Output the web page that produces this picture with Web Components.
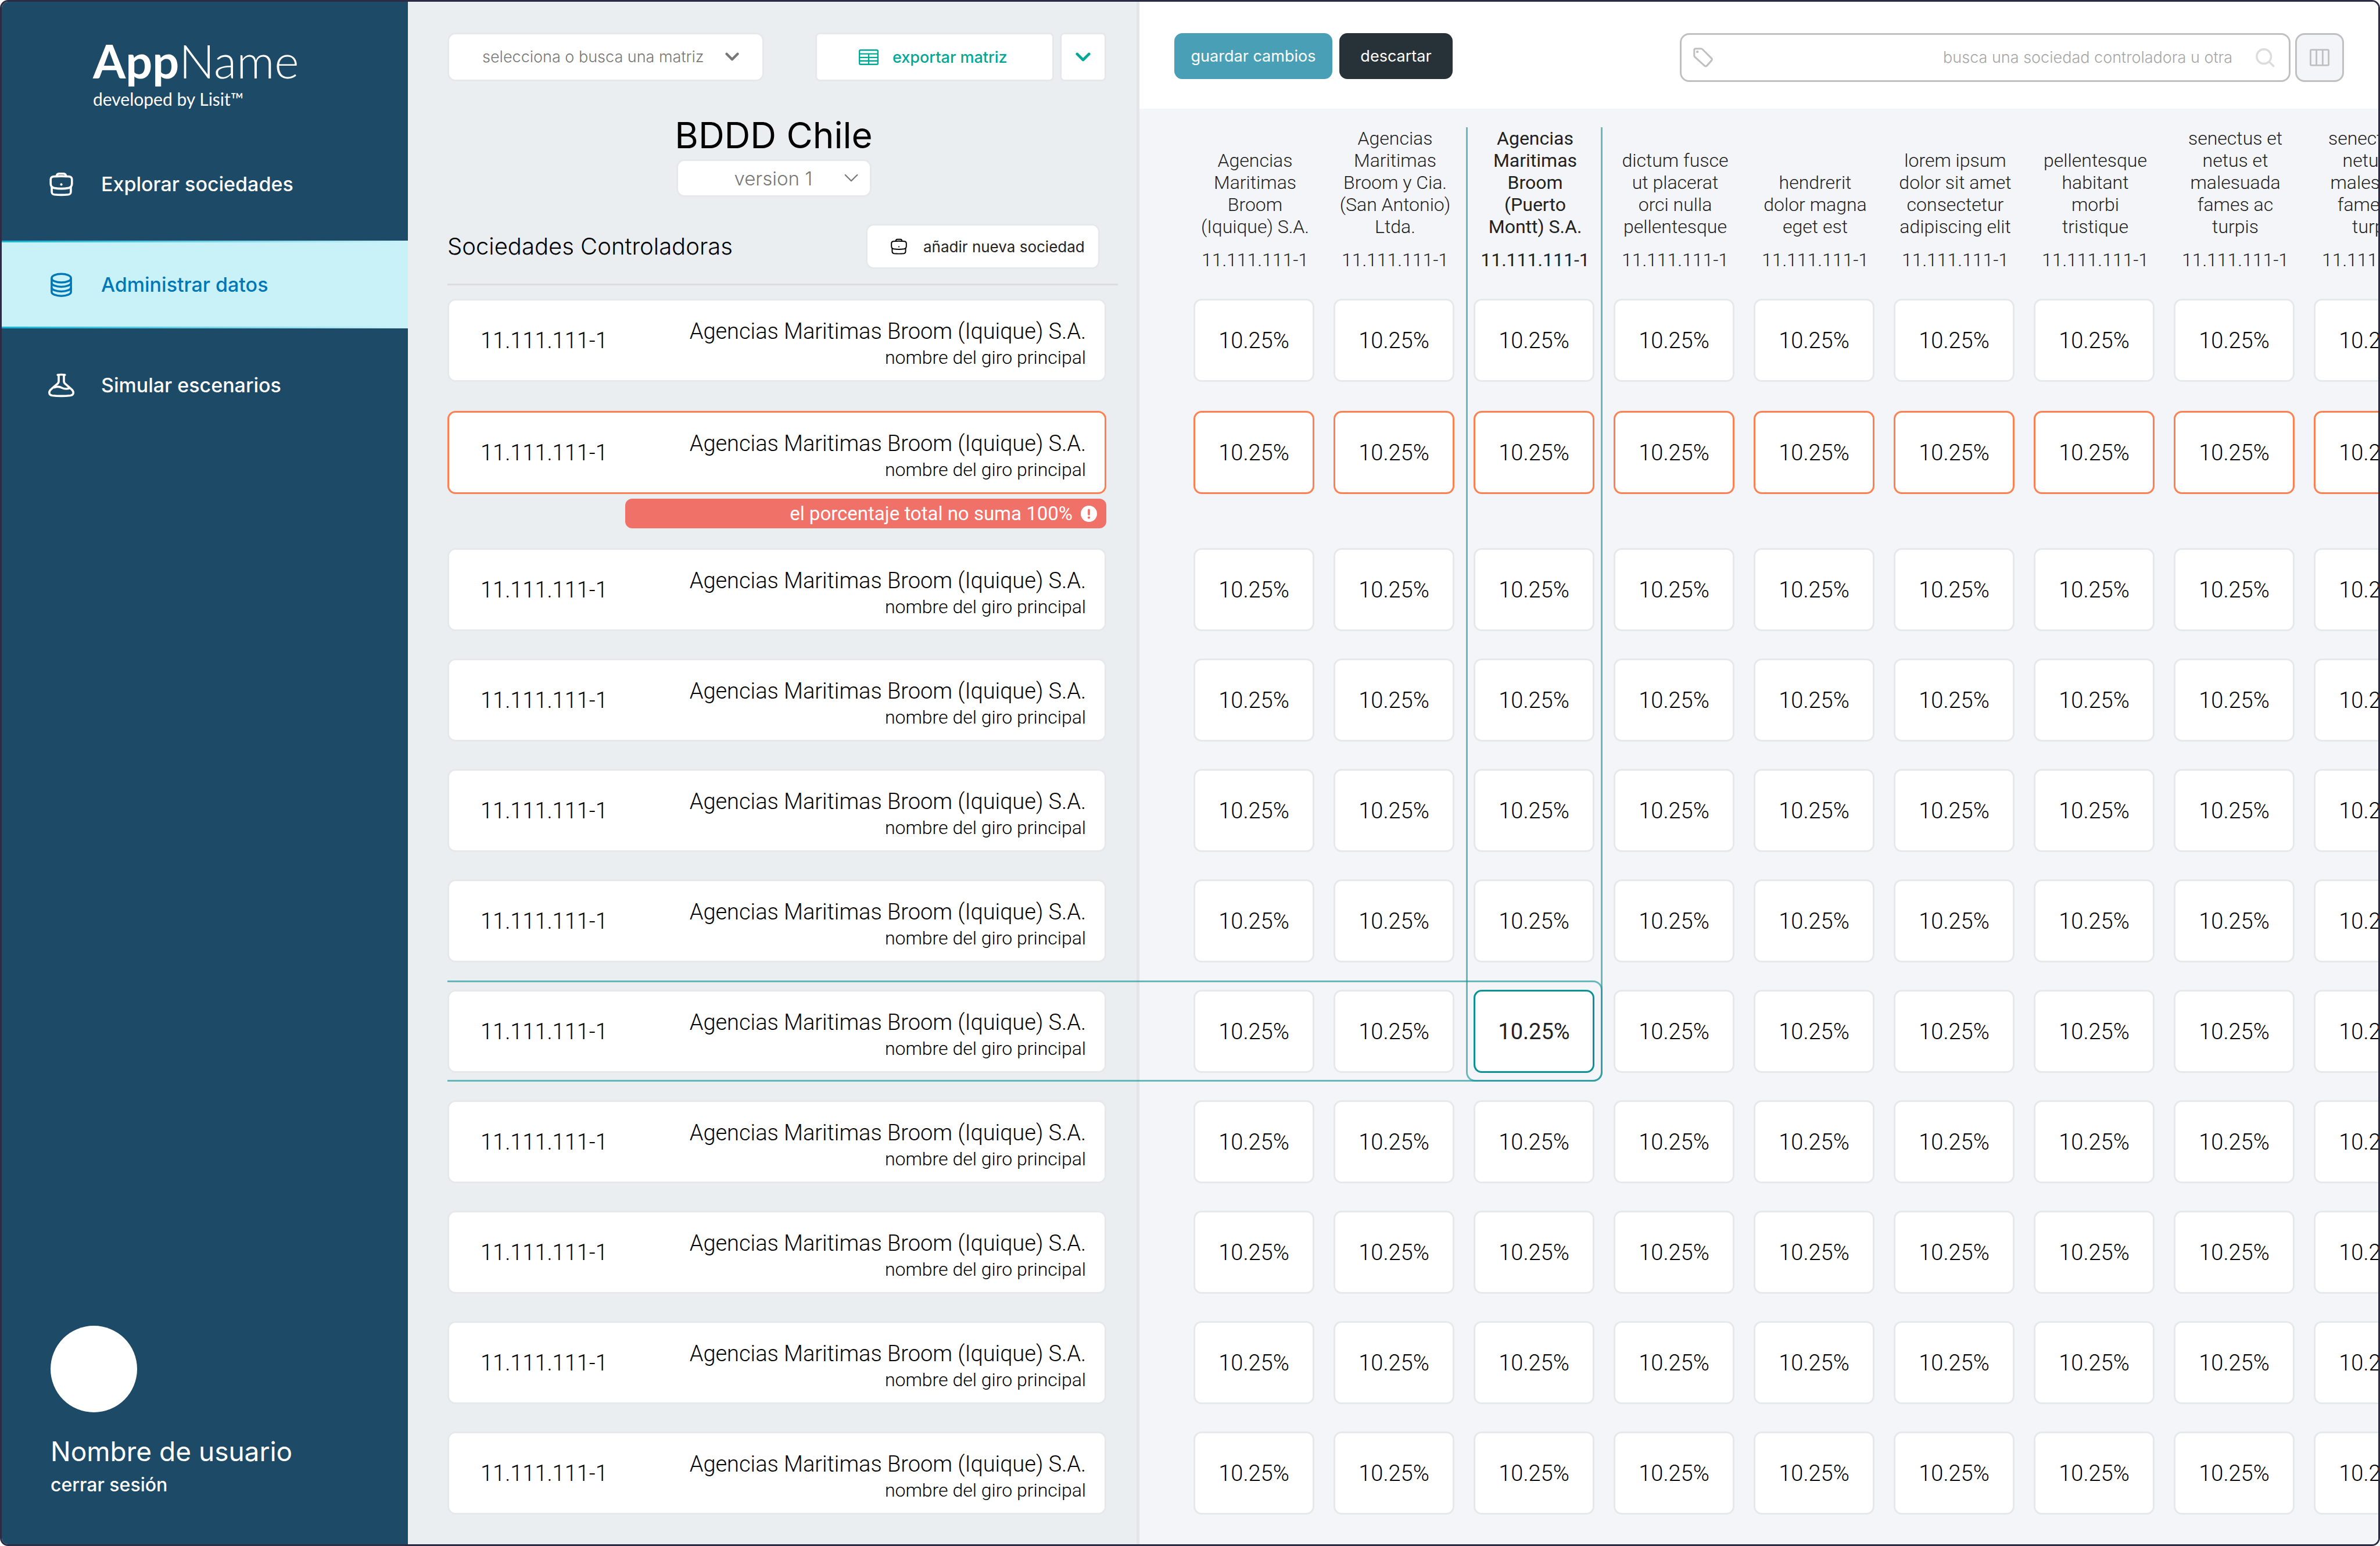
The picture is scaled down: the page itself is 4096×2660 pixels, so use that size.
<!DOCTYPE html>
<html lang="es">
<head>
<meta charset="utf-8">
<title>AppName – Administrar datos</title>
<style>
  :root {
    --frame: #2c2b45;
    --navy: #1d4a67;
    --panel: #eaeef1;
    --canvas: #f4f5f8;
    --edge: #e6e8ec;
    --teal: #00a896;
    --select: #0b9196;
    --alert: #ff7f50;
    --ui: Inter, "Liberation Sans", sans-serif;
    --data: Roboto, "Liberation Sans", sans-serif;
    --brand: Lato, "Liberation Sans", sans-serif;
    --row: 190px;
    --row-lead: 193px;
    --row-alert: 236px;
    --card: 143px;
  }
  html, body { margin: 0; background: #fff; }
  body { font-family: var(--ui); color: #000; }
</style>
</head>
<body>
<app-shell>
  <app-sidebar>
    <nav-item icon="briefcase">Explorar sociedades</nav-item>
    <nav-item icon="database" active>Administrar datos</nav-item>
    <nav-item icon="flask">Simular escenarios</nav-item>
  </app-sidebar>
  <society-panel></society-panel>
  <matrix-panel></matrix-panel>
</app-shell>

<script>
const ICONS = {
  briefcase: ['0 0 46 46', `<g fill="none" stroke="currentColor" stroke-width="4" stroke-linecap="round" stroke-linejoin="round">
    <path d="M14 8c.5-3.500 2-5 4.500-5h9c2.500 0 4 1.500 4.500 5"/>
    <path d="M3 14c0-3.500 2-5 5-5.500 10-1 20-1 30 0 3 .5 5 2 5 5.500v8c0 5-2 7-6 8-9 1.700-19 1.700-28 0-4-1-6-3-6-8z"/>
    <path d="M5 28v9c0 4 1.500 5 5 5.500 9 .8 17 .8 26 0 3.500-.5 5-1.500 5-5.500v-9"/></g><circle cx="23" cy="23.500" r="2.300" fill="currentColor"/>`],
  briefcaseThin: ['0 0 46 46', `<g fill="none" stroke="currentColor" stroke-width="3.200" stroke-linecap="round" stroke-linejoin="round">
    <path d="M14 8c.5-3.500 2-5 4.500-5h9c2.500 0 4 1.500 4.500 5"/>
    <path d="M2 14c0-3.500 2-5 5-5.500 10.500-1 21.500-1 32 0 3 .5 5 2 5 5.500v8c0 5-2 7-6 8-10 1.700-20 1.700-30 0-4-1-6-3-6-8z"/>
    <path d="M4 28v9c0 4 1.500 5.500 5 6 9 1 19 1 28 0 3.500-.5 5-2 5-6v-9"/></g><circle cx="23" cy="24" r="1.700" fill="currentColor"/>`],
  database: ['0 0 46 48', `<g fill="none" stroke="currentColor" stroke-width="4">
    <ellipse cx="23" cy="11" rx="19" ry="8.500"/>
    <path d="M4 11v27c0 4.500 8.500 8 19 8s19-3.500 19-8V11"/>
    <path d="M4 20c0 4.500 8.500 8 19 8s19-3.500 19-8M4 29c0 4.500 8.500 8 19 8s19-3.500 19-8"/></g>`],
  flask: ['0 0 50 46', `<g fill="none" stroke="currentColor" stroke-width="4" stroke-linecap="round" stroke-linejoin="round">
    <path d="M18 3c5-.7 9-.7 14 0"/>
    <path d="M20 4v11c0 3-1 4.500-3.500 6L6 30c-2.500 2-4 4-4 7 0 3.500 2 5 5.500 5.500 11 1.200 24 1.200 35 0C46 42 48 40.500 48 37c0-3-1.500-5-4-7l-10.500-9C31 19.500 30 18 30 15V4"/>
    <path d="M12 27c5-2 9-2 14 .7 5 2.600 9 2.600 15 .8"/></g>`],
  chevron: ['0 0 28 18', `<path d="M3 3l11 11L25 3" fill="none" stroke="currentColor" stroke-width="5" stroke-linecap="round" stroke-linejoin="round"/>`],
  chevronThin: ['0 0 28 18', `<path d="M2 2l12 12L26 2" fill="none" stroke="currentColor" stroke-width="2.600" stroke-linecap="round" stroke-linejoin="round"/>`],
  table: ['0 0 38 30', `<g fill="none" stroke="currentColor" stroke-width="2.600">
    <rect x="1.300" y="1.300" width="35.400" height="27.400" rx="2"/><path d="M1 8.500h36M1 15.500h36M1 22h36M19 8.500v20"/></g>`],
  tag: ['0 0 38 38', `<path d="M2 4.500C2 3 3 2 4.500 2H15c1.200 0 2 .3 3 1.300l17 17c1.700 1.700 1.700 3 0 4.700L26.500 34.500c-1.700 1.700-3.300 1.700-5 0L3.300 18C2.300 17 2 16 2 15z" fill="none" stroke="currentColor" stroke-width="3.400" stroke-linejoin="round"/><circle cx="8" cy="8" r="2.400" fill="currentColor"/>`],
  search: ['0 0 36 36', `<g fill="none" stroke="currentColor" stroke-width="3.800" stroke-linecap="round"><circle cx="15.500" cy="15.500" r="13.500"/><path d="M25.500 25.500l8 8"/></g>`],
  columns: ['0 0 38 33', `<g fill="none" stroke="currentColor" stroke-width="3.200"><rect x="1.600" y="1.600" width="34.800" height="29.800" rx="2"/><path d="M13 2v29M25 2v29"/></g>`],
  warning: ['0 0 30 30', `<circle cx="15" cy="15" r="15" fill="currentColor"/><path d="M15 8v8" stroke="#f07167" stroke-width="4" stroke-linecap="round"/><circle cx="15" cy="22" r="2.300" fill="#f07167"/>`]
};

const define = (name, html) => customElements.define(name, class extends HTMLElement {
  constructor() {
    super();
    const template = document.createElement('template');
    template.innerHTML = typeof html === 'function' ? html(this) : html;
    this.attachShadow({ mode: 'open' }).append(template.content.cloneNode(true));
  }
});

define('ui-icon', host => {
  const [box, art] = ICONS[host.getAttribute('name')];
  return `<style>:host{display:block;flex:none}svg{display:block;width:100%;height:100%}</style>
    <svg viewBox="${box}" aria-hidden="true">${art}</svg>`;
});

define('nav-item', host => `<style>
  :host { display: block; color: #fff; }
  :host([active]) {
    color: #0077b6;
    background:
      linear-gradient(90deg, #12b4d6, #c9f1f8) top / 100% 3px no-repeat,
      linear-gradient(90deg, #12b4d6, #c9f1f8) bottom / 100% 3px no-repeat,
      #c9f1f8;
  }
  a { display: flex; align-items: center; gap: 46px; height: 151px; padding-left: 80px;
      color: inherit; text-decoration: none; font: 500 34px/40px var(--ui); }
  ui-icon { width: 45px; height: 42px; }
</style><a href="#"><ui-icon name="${host.getAttribute('icon')}"></ui-icon><slot></slot></a>`);

define('app-sidebar', `<style>
  :host { display: flex; flex-direction: column; background: var(--navy); color: #fff; }
  header { padding: 53px 0 0 157px; font-family: var(--brand); }
  .name { font-size: 81px; line-height: 96px; font-weight: 300; }
  .name b { font-weight: 700; }
  .by { font-size: 30px; line-height: 36px; }
  nav { display: grid; gap: 22px; padding-top: 53px; }
  footer { margin-top: auto; padding: 0 0 78px 84px; }
  .avatar { width: 149px; height: 149px; border-radius: 50%; background: #fff; }
  .user { margin: 39px 0 6px; font-size: 46px; line-height: 56px; }
  a { display: block; color: inherit; text-decoration: none; font-weight: 500; font-size: 32px; line-height: 48px; }
</style>
<header><div class="name"><b>App</b>Name</div><div class="by">developed by Lisit™</div></header>
<nav><slot></slot></nav>
<footer><div class="avatar"></div><div class="user">Nombre de usuario</div><a href="#">cerrar sesión</a></footer>`);

define('ui-select', host => `<style>
  :host { display: grid; align-items: center; }
  select, ui-icon { grid-area: 1 / 1; }
  select { appearance: none; box-sizing: border-box; width: 100%; height: 100%; margin: 0;
    padding: 0 0 0 var(--start); border: 3px solid var(--edge); border-radius: 14px;
    background: #fff; color: #777; font: 300 var(--size)/40px var(--ui); }
  ui-icon { justify-self: end; width: 24px; height: 16px; margin-right: var(--end); color: #777; pointer-events: none; }
</style>
<select aria-label="${host.getAttribute('label')}"><option>${host.getAttribute('value')}</option></select>
<ui-icon name="${host.getAttribute('icon')}"></ui-icon>`);

define('society-card', host => `<style>
  :host { display: block; height: var(--row); position: relative; }
  :host([kind="lead"]) { height: var(--row-lead); }
  :host([kind="alert"]) { height: var(--row-alert); }
  :host([kind="selected"])::after { content: ""; position: absolute; z-index: 2; left: 0; top: -16px;
    box-sizing: border-box; width: 1988px; height: 174px; border: 3px solid var(--select); border-left: 0;
    border-radius: 0 16px 16px 0; opacity: .6; pointer-events: none; }
  article { box-sizing: border-box; height: var(--card); display: flex; justify-content: space-between;
    padding: 0 32px 0 54px; border: 3px solid var(--edge); border-radius: 14px; background: #fff;
    font: 300 38px/44px var(--data); }
  :host([kind="alert"]) article { border-color: var(--alert); }
  .id { align-self: center; }
  .text { padding-top: 31px; text-align: right; }
  small { display: block; font-size: 32px; line-height: 46px; }
  .badge { box-sizing: border-box; display: flex; justify-content: flex-end; align-items: center; gap: 14px;
    width: 73%; height: 51px; margin: 8px 0 0 auto; padding-right: 16px; border-radius: 12px;
    background: #f07167; color: #fff; font: 400 33px/40px var(--data); }
  ui-icon { width: 28px; height: 28px; }
</style>
<article><span class="id">11.111.111-1</span>
<div class="text">Agencias Maritimas Broom (Iquique) S.A.<small>nombre del giro principal</small></div></article>
${host.getAttribute('kind') === 'alert' ? '<div class="badge" role="alert">el porcentaje total no suma 100%<ui-icon name="warning"></ui-icon></div>' : ''}`);

const KINDS = ['lead', 'alert', 'plain', 'plain', 'plain', 'plain', 'selected', 'plain', 'plain', 'plain', 'plain'];

define('society-panel', () => `<style>
  :host { display: block; position: relative; z-index: 1; background: var(--panel); padding-left: 68px; }
  .tools { display: flex; padding: 53px 52px 0 0; }
  .tools ui-select { width: 545px; height: 84px; margin-right: auto; --start: 57px; --size: 27px; --end: 43px; }
  button { box-sizing: border-box; margin: 0; border: 3px solid var(--edge); background: #fff;
    display: flex; align-items: center; font-family: var(--ui); }
  .export { width: 411px; height: 84px; padding: 0 0 0 72px; gap: 24px; border-radius: 8px; color: var(--teal);
    font-weight: 500; font-size: 27px; }
  .export ui-icon { width: 34px; height: 27px; }
  .more { width: 80px; height: 84px; margin-left: 10px; padding: 0; justify-content: center; border-radius: 8px; color: var(--teal); }
  .more ui-icon { width: 26px; height: 17px; }
  .head { padding-right: 63px; }
  h1 { margin: 57px 0 5px; text-align: center; font-weight: 400; font-size: 62px; line-height: 72px; }
  .version { width: 336px; height: 65px; margin: 0 auto; --start: 97px; --size: 33px; --end: 23px; }
  .row { display: flex; justify-content: space-between; align-items: center; margin-top: 46px; }
  h2 { margin: 0; font-weight: 300; font-size: 40px; line-height: 48px; }
  .add { width: 403px; height: 78px; padding: 0 0 0 40px; gap: 28px; border-radius: 14px; color: #222; font-size: 26px; font-weight: 400; }
  .add ui-icon { width: 28px; height: 28px; color: #000; }
  hr { height: 3px; margin: 25px 32px 23px 0; border: 0; background: #dadcdd; }
  .list { padding-right: 52px; }
</style>
<div class="tools">
  <ui-select label="Matriz" value="selecciona o busca una matriz" icon="chevron"></ui-select>
  <button class="export" type="button"><ui-icon name="table"></ui-icon>exportar matriz</button>
  <button class="more" type="button" aria-label="Más formatos"><ui-icon name="chevron"></ui-icon></button>
</div>
<div class="head">
  <h1>BDDD Chile</h1>
  <ui-select class="version" label="Versión" value="version 1" icon="chevronThin"></ui-select>
  <div class="row"><h2>Sociedades Controladoras</h2>
    <button class="add" type="button"><ui-icon name="briefcaseThin"></ui-icon>añadir nueva sociedad</button></div>
</div>
<hr>
<div class="list">${KINDS.map(k => `<society-card kind="${k}"></society-card>`).join('')}</div>`);

const COLUMNS = [
  'Agencias\nMaritimas\nBroom\n(Iquique) S.A.',
  'Agencias\nMaritimas\nBroom y Cia.\n(San Antonio)\nLtda.',
  'Agencias\nMaritimas\nBroom\n(Puerto\nMontt) S.A.',
  'dictum fusce\nut placerat\norci nulla\npellentesque',
  'hendrerit\ndolor magna\neget est',
  'lorem ipsum\ndolor sit amet\nconsectetur\nadipiscing elit',
  'pellentesque\nhabitant\nmorbi\ntristique',
  'senectus et\nnetus et\nmalesuada\nfames ac\nturpis',
  'senectus et\nnetus et\nmalesuada\nfames ac\nturpis'
];
const SELECTED = 2;

define('matrix-table', () => `<style>
  :host { display: block; position: relative; padding-left: 93px; overflow: hidden; }
  table { table-layout: fixed; width: 2169px; border-collapse: collapse; font: 300 38px/44px var(--data); }
  th { height: 279px; padding: 0 29px 48px 0; vertical-align: bottom; white-space: pre;
    font-weight: 300; font-size: 32px; line-height: 38px; color: #222; }
  th span { display: flex; justify-content: center; margin-top: 19px; }
  th.on { font-weight: 400; }
  td { height: var(--row); padding: 0 33px 0 0; vertical-align: top; }
  tr.lead td { height: var(--row-lead); }
  tr.alert td { height: var(--row-alert); }
  td div { box-sizing: border-box; height: var(--card); display: flex; align-items: center; justify-content: center;
    border: 3px solid var(--edge); border-radius: 14px; background: #fff; }
  tr.alert div { border-color: var(--alert); }
  td.on div { border-color: var(--select); font-weight: 400; color: #222; }
  .band { position: absolute; left: 562px; top: 32px; box-sizing: border-box; width: 235px; height: 1642px;
    border: 3px solid var(--select); border-top: 0; border-radius: 0 0 16px 16px; opacity: .6; pointer-events: none; }
</style>
<table><thead><tr>${COLUMNS.map((c, i) => `<th scope="col"${i === SELECTED ? ' class="on"' : ''}>${c}<span>11.111.111-1</span></th>`).join('')}</tr></thead>
<tbody>${KINDS.map(k => `<tr class="${k}">${COLUMNS.map((c, i) => `<td${k === 'selected' && i === SELECTED ? ' class="on"' : ''}><div>10.25%</div></td>`).join('')}</tr>`).join('')}</tbody></table>
<div class="band"></div>`);

define('matrix-panel', `<style>
  :host { display: block; min-width: 0; overflow: hidden; border-left: 5px solid #e4e5e6; background: var(--canvas); }
  .bar { box-sizing: border-box; height: 184px; display: flex; align-items: flex-start; padding: 54px 59px 0 60px; background: #fff; }
  button { box-sizing: border-box; margin: 0; padding: 0; border: 0; border-radius: 14px; height: 79px;
    color: #fff; font: 400 27px/40px var(--ui); }
  .save { width: 272px; background: #499fb6; }
  .drop { width: 195px; margin: 0 auto 0 12px; background: #263238; }
  .search { box-sizing: border-box; width: 1051px; height: 84px; display: flex; align-items: center; gap: 40px;
    padding: 0 24px 0 20px; border: 3px solid #c0c0c0; border-radius: 16px; color: #c0c0c0; }
  input { flex: 1; min-width: 0; border: 0; outline: 0; padding: 0; background: none; text-align: right; font: 300 27px/40px var(--ui); color: #555; }
  input::placeholder { color: #a6a6a6; opacity: 1; }
  .tag { width: 34px; height: 34px; }
  .lens { width: 33px; height: 33px; color: #dcdcdc; }
  .cols { display: flex; align-items: center; justify-content: center; width: 84px; height: 84px; margin-left: 8px;
    border: 3px solid #c0c0c0; border-radius: 16px; background: var(--canvas); color: #c0c0c0; }
  .cols ui-icon { width: 34px; height: 30px; }
</style>
<div class="bar">
  <button class="save" type="button">guardar cambios</button>
  <button class="drop" type="button">descartar</button>
  <label class="search"><ui-icon class="tag" name="tag"></ui-icon>
    <input type="text" aria-label="Buscar sociedad" placeholder="busca una sociedad controladora u otra">
    <ui-icon class="lens" name="search"></ui-icon></label>
  <button class="cols" type="button" aria-label="Columnas"><ui-icon name="columns"></ui-icon></button>
</div>
<matrix-table></matrix-table>`);

define('app-shell', `<style>
  :host { display: grid; grid-template-columns: minmax(0, 699fr) minmax(0, 1254fr) minmax(0, 2137fr);
    box-sizing: border-box; min-height: 100vh; border: 3px solid var(--frame); border-radius: 14px; overflow: hidden; }
</style><slot></slot>`);
</script>
</body>
</html>
